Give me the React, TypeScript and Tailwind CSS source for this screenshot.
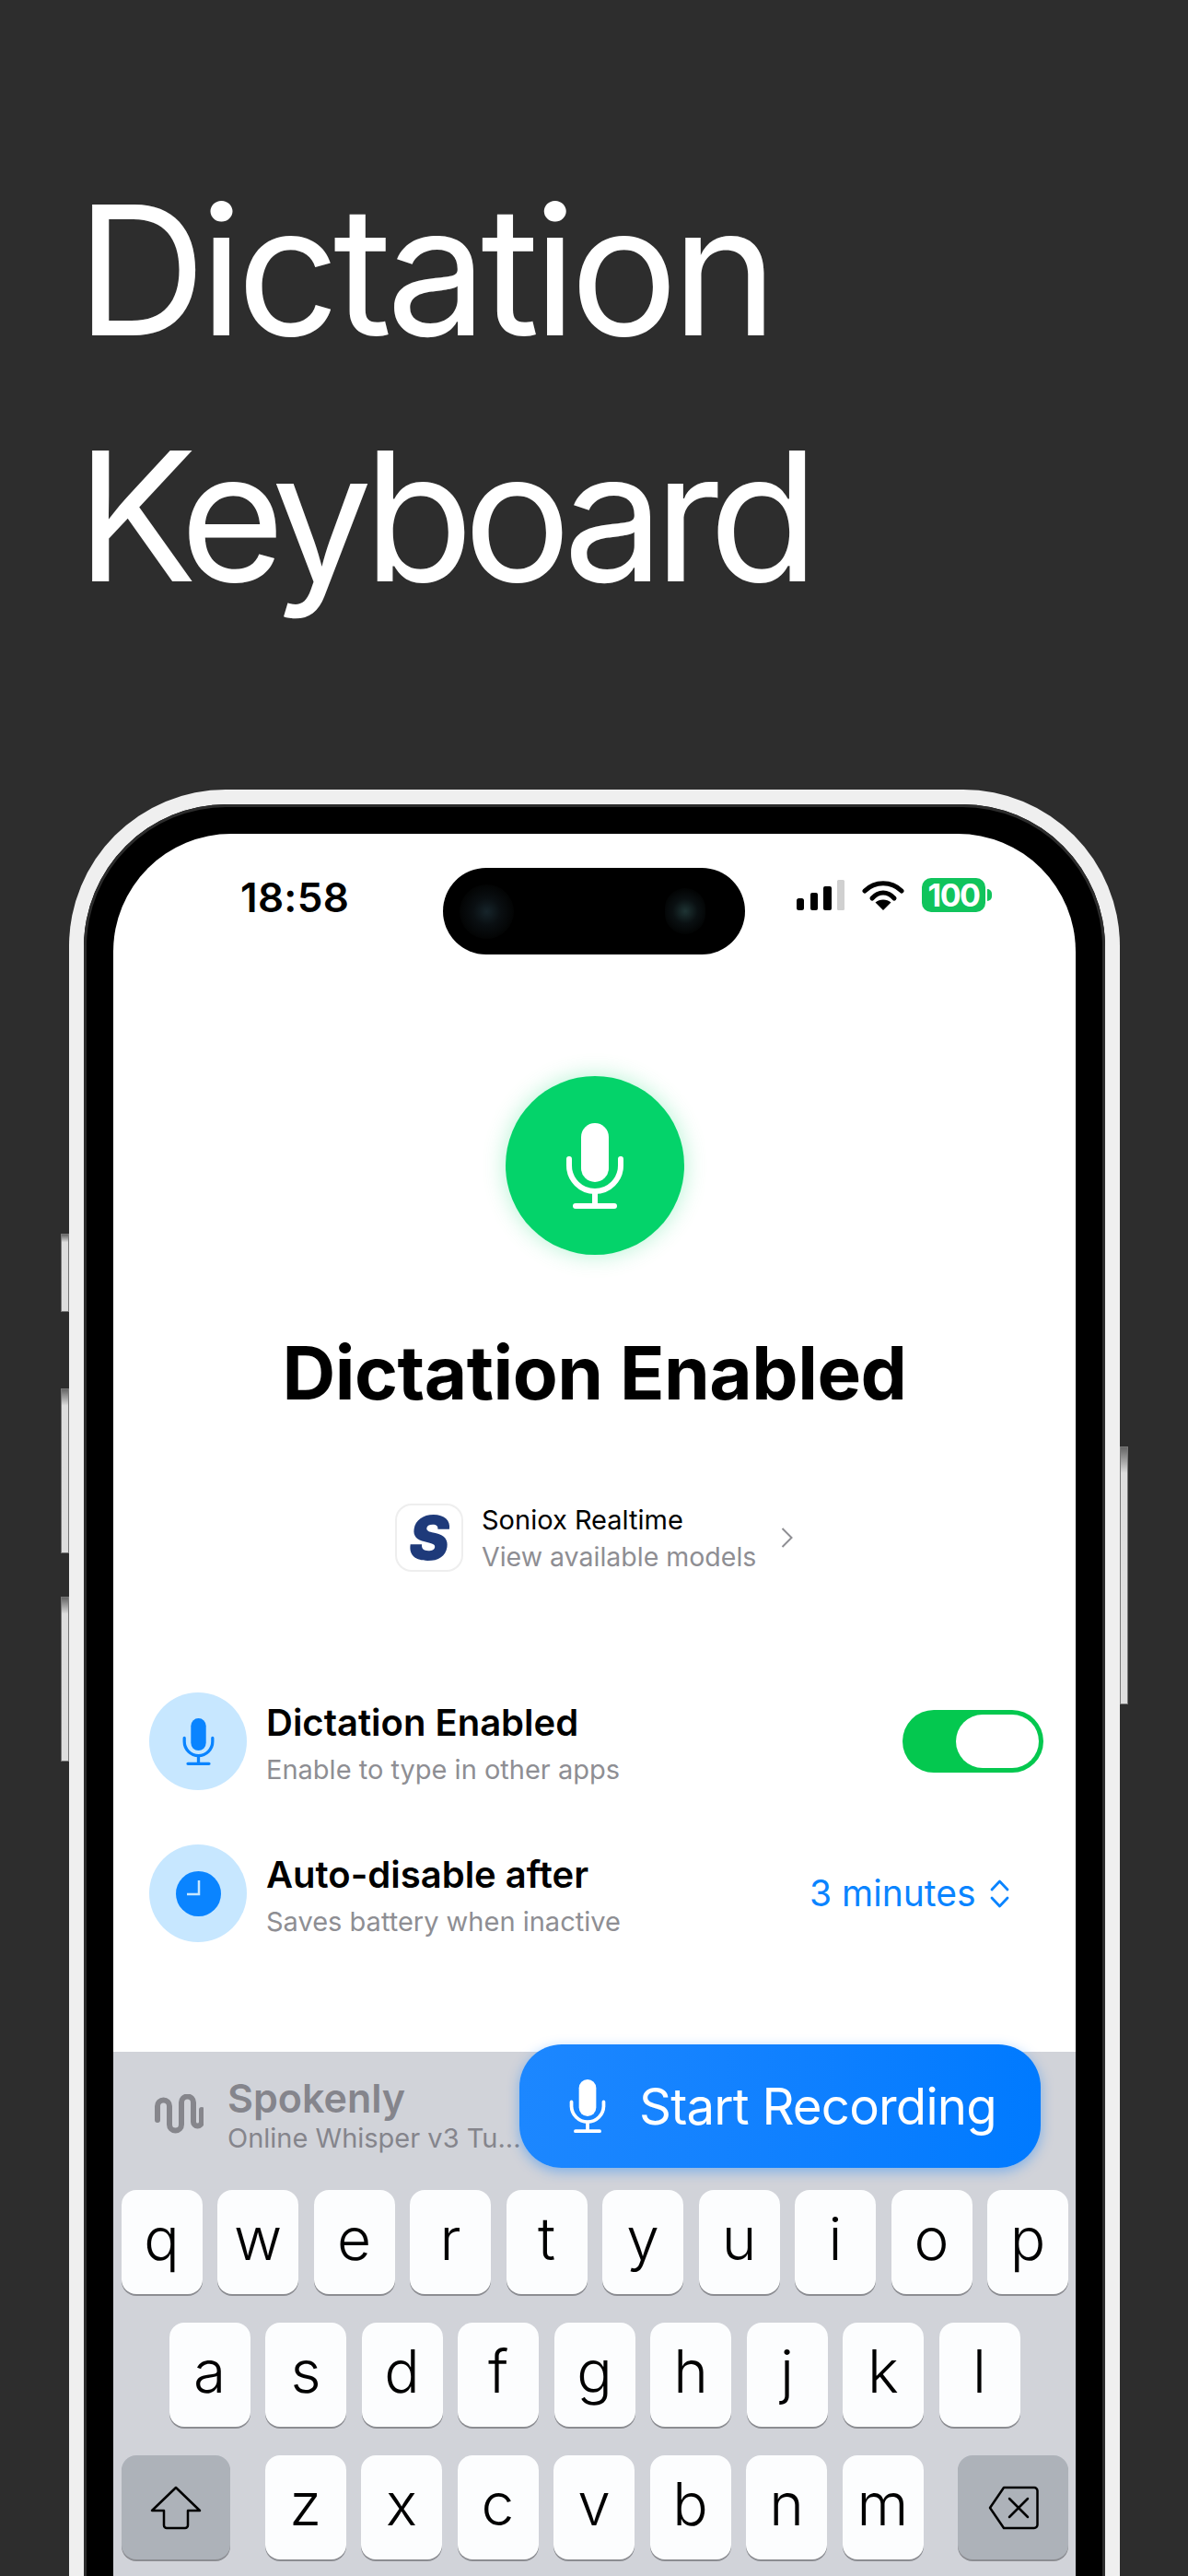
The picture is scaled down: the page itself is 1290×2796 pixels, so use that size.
import React from "react";

function Mic({ className, color }: { className: string; color: string }) {
  return (
    <svg viewBox="0 0 64 93" className={className} fill="none">
      <rect x="17" y="0" width="30" height="64" rx="15" fill={color} />
      <path d="M4 39v7a28 28 0 0 0 56 0v-7" stroke={color} strokeWidth="6" strokeLinecap="round" />
      <path d="M32 76v14M11 90h42" stroke={color} strokeWidth="6" strokeLinecap="round" />
    </svg>
  );
}

function Key({ label, w = "w-[88px]" }: { label: string; w?: string }) {
  return (
    <div className={`${w} h-[113px] shrink-0 rounded-[16px] bg-[#fcfdfe] shadow-[0_2px_0_#8c8d92] flex items-center justify-center text-[64px] leading-none font-light text-black pb-[7px]`}>
      {label}
    </div>
  );
}

function SideButton({ className }: { className: string }) {
  return (
    <div className={`absolute w-[9px] border border-[#777] bg-gradient-to-b from-[#666] via-[#dedede] via-[10%] to-[#dedede] ${className}`} />
  );
}

export default function App() {
  return (
    <div className="w-[1290px] h-[2796px] overflow-hidden bg-[#2d2d2d] font-['Inter',sans-serif]">
      <div className="pl-[83px] pt-[160px] h-[857px]">
        <div className="text-[195px] leading-[267px] font-[375] text-white tracking-[-6.900px]">Dictation</div>
        <div className="text-[195px] leading-[267px] font-[375] text-white tracking-[-10.700px]">Keyboard</div>
      </div>

      <div className="relative ml-[75px] w-[1141px] rounded-t-[170px] bg-[#efefef] p-[16px] pb-0">
        <SideButton className="left-[-9px] top-[482px] h-[85px]" />
        <SideButton className="left-[-9px] top-[650px] h-[179px]" />
        <SideButton className="left-[-9px] top-[876px] h-[179px]" />
        <SideButton className="right-[-9px] top-[713px] h-[280px]" />

        <div className="rounded-t-[155px] bg-black p-[32px] pb-0 shadow-[inset_0_0_0_3px_#2c2c2c]">
          <div className="h-[1960px] rounded-t-[128px] bg-white flex flex-col overflow-hidden">
            {/* status bar */}
            <div className="flex items-start h-[263px] pt-[37px] shrink-0">
              <div className="ml-[138px] w-[220px] mt-[6px] text-[44px] leading-[52px] font-semibold tracking-[0.3px] text-black">18:58</div>
              <div className="w-[328px] h-[94px] rounded-full bg-black flex items-center justify-between pl-[18px] pr-[43px] shrink-0">
                <div className="w-[59px] h-[59px] rounded-full bg-[radial-gradient(circle,#16242a_0%,#0a0f12_35%,#030404_70%,#000_100%)]" />
                <div className="w-[44px] h-[50px] rounded-full bg-[radial-gradient(circle,#1e3434_0%,#0a1012_40%,#020303_75%,#000_100%)]" />
              </div>
              <div className="ml-[56px] mt-[13px] flex items-start">
                <svg viewBox="0 0 53 35" className="w-[53px] h-[35px]">
                  <rect x="0" y="20" width="8" height="13" rx="2.5" fill="#000" />
                  <rect x="15" y="14" width="8" height="19" rx="2" fill="#000" />
                  <rect x="29" y="7" width="9" height="26" rx="2" fill="#000" />
                  <rect x="44" y="0" width="8" height="33" rx="1.5" fill="#d0d0d0" />
                </svg>
                <svg viewBox="0 0 46 33" className="ml-[18px] w-[46px] h-[33px]" fill="none">
                  <path d="M3 12C14 1 32 1 43 12" stroke="#000" strokeWidth="5" strokeLinecap="round" />
                  <path d="M11 20C18 12 28 12 35 20" stroke="#000" strokeWidth="5" strokeLinecap="round" />
                  <path d="M23 33L14.5 24.5C19 20.5 27 20.5 31.500 24.5Z" fill="#000" />
                </svg>
                <div className="ml-[19px] -mt-[2px] w-[69px] h-[37px] rounded-[10px] bg-[#10c45c] flex items-center justify-center text-[34px] leading-none font-bold text-white tracking-[-1.500px]">100</div>
                <div className="ml-[2px] mt-[10px] w-[5px] h-[13px] rounded-r-full bg-[#10c45c]" />
              </div>
            </div>

            {/* hero */}
            <div className="flex flex-col items-center shrink-0">
              <div className="w-[194px] h-[194px] rounded-full bg-[#04d36a] shadow-[0_0_24px_rgba(4,211,106,0.3)] flex items-center justify-center">
                <Mic className="w-[64px] h-[93px]" color="#ffffff" />
              </div>
              <div className="mt-[78px] text-[80px] leading-[100px] font-bold tracking-[-0.500px] text-black whitespace-nowrap">Dictation Enabled</div>
            </div>

            {/* model row */}
            <div className="mt-[88px] ml-[306px] flex items-center shrink-0">
              <div className="w-[74px] h-[74px] rounded-[18px] border-2 border-[#eeeeee] bg-white flex items-center justify-center text-[#1e3a7a] text-[66px] leading-none font-black italic">S</div>
              <div className="ml-[20px] w-[325px]">
                <div className="mt-[3px] text-[29px] leading-[38px] text-black">Soniox Realtime</div>
                <div className="mt-[2px] text-[28.500px] leading-[38px] text-[#8e8e93]">View available models</div>
              </div>
              <svg viewBox="0 0 13 22" className="w-[13px] h-[22px]" fill="none">
                <path d="M1.500 1l10 10-10 10" stroke="#8e8e93" strokeWidth="2" />
              </svg>
            </div>

            {/* settings */}
            <div className="mt-[128px] flex items-center ml-[39px] shrink-0">
              <div className="w-[106px] h-[106px] rounded-full bg-[#c7e7ff] flex items-center justify-center">
                <Mic className="w-[35px] h-[51px]" color="#0a84ff" />
              </div>
              <div className="ml-[21px] w-[691px] pt-[5px]">
                <div className="text-[40px] leading-[50px] font-semibold text-black">Dictation Enabled</div>
                <div className="mt-[6px] text-[29px] leading-[40px] text-[#8e8e93]">Enable to type in other apps</div>
              </div>
              <div className="relative w-[153px] h-[68px] rounded-full bg-[#04c84f] flex items-center pl-[58px]">
                <div className="w-[90px] h-[58px] rounded-full bg-white" />
              </div>
            </div>
            <div className="mt-[59px] flex items-center ml-[39px] shrink-0">
              <div className="w-[106px] h-[106px] rounded-full bg-[#c7e7ff] flex items-center justify-center">
                <svg viewBox="0 0 49 49" className="w-[49px] h-[49px]" fill="none">
                  <circle cx="24.500" cy="24.500" r="24.500" fill="#0a84ff" />
                  <path d="M25 10v15H12" stroke="#c7e7ff" strokeWidth="2.500" />
                </svg>
              </div>
              <div className="ml-[21px] w-[590px] pt-[5px]">
                <div className="text-[40px] leading-[50px] font-semibold text-black">Auto-disable after</div>
                <div className="mt-[6px] text-[29px] leading-[40px] text-[#8e8e93]">Saves battery when inactive</div>
              </div>
              <div className="text-[39px] leading-[50px] text-[#0a84ff] whitespace-nowrap">3 minutes</div>
              <svg viewBox="0 0 21 31" className="ml-[16px] w-[21px] h-[31px]" fill="none">
                <path d="M2 11L10.500 2 19 11M2 20l8.500 9 8.500-9" stroke="#0a84ff" strokeWidth="2.800" strokeLinecap="round" strokeLinejoin="round" />
              </svg>
            </div>

            <div className="h-[119px] shrink-0" />

            {/* keyboard */}
            <div className="flex-1 bg-[#d1d3d9]">
              <div className="flex h-[150px] items-start">
                <svg viewBox="0 0 53 44" className="ml-[45px] mt-[46px] w-[53px] h-[44px] shrink-0" fill="none">
                  <path d="M3 28V13a6.500 6.500 0 0 1 13 0v20a6.500 6.500 0 0 0 13 0V9a6.500 6.500 0 0 1 13 0v21a4.500 4.500 0 0 0 9 0V17" stroke="#86868c" strokeWidth="6" strokeLinecap="round" />
                </svg>
                <div className="ml-[26px] mt-[25px] w-[317px] shrink-0">
                  <div className="text-[43px] leading-[50px] font-semibold text-[#85858c]">Spokenly</div>
                  <div className="text-[29px] leading-[38px] text-[#85858c] whitespace-nowrap">Online Whisper v3 Tu...</div>
                </div>
                <div className="-mt-[8px] w-[566px] h-[134px] rounded-[46px] bg-gradient-to-r from-[#1c87ff] to-[#007aff] shadow-[0_4px_14px_rgba(0,122,255,0.4)] flex items-center shrink-0 pl-[54px]">
                  <Mic className="w-[40px] h-[58px]" color="#ffffff" />
                  <span className="ml-[36px] text-[54.500px] leading-none text-white whitespace-nowrap font-normal tracking-[-0.800px]">Start Recording</span>
                </div>
              </div>
              <div className="flex gap-[16.500px] pl-[8.500px]">
                {"qwertyuiop".split("").map((k) => <Key key={k} label={k} />)}
              </div>
              <div className="flex gap-[16.500px] pl-[60.500px] mt-[31px]">
                {"asdfghjkl".split("").map((k) => <Key key={k} label={k} />)}
              </div>
              <div className="flex mt-[31px] pl-[8.500px]">
                <div className="w-[118px] h-[113px] rounded-[16px] bg-[#adb2b9] shadow-[0_2px_0_#8c8d92] flex items-center justify-center shrink-0">
                  <svg viewBox="0 0 56 48" className="w-[56px] h-[48px]" fill="none">
                    <path d="M28 2L2 27h13v16a3 3 0 0 0 3 3h20a3 3 0 0 0 3-3V27h13Z" stroke="#000" strokeWidth="2.500" strokeLinejoin="round" />
                  </svg>
                </div>
                <div className="flex gap-[16.500px] ml-[38px]">
                  {"zxcvbnm".split("").map((k) => <Key key={k} label={k} />)}
                </div>
                <div className="ml-[37.500px] w-[120px] h-[113px] rounded-[16px] bg-[#adb2b9] shadow-[0_2px_0_#8c8d92] flex items-center justify-center shrink-0">
                  <svg viewBox="0 0 55 48" className="w-[55px] h-[48px]" fill="none">
                    <path d="M17 2h33a3.500 3.500 0 0 1 3.500 3.500v37a3.500 3.500 0 0 1-3.500 3.500H17L2 24Z" stroke="#000" strokeWidth="2.500" strokeLinejoin="round" />
                    <path d="M23 14l20 20M43 14L23 34" stroke="#000" strokeWidth="2.500" strokeLinecap="round" />
                  </svg>
                </div>
              </div>
            </div>
          </div>
        </div>
      </div>
    </div>
  );
}
